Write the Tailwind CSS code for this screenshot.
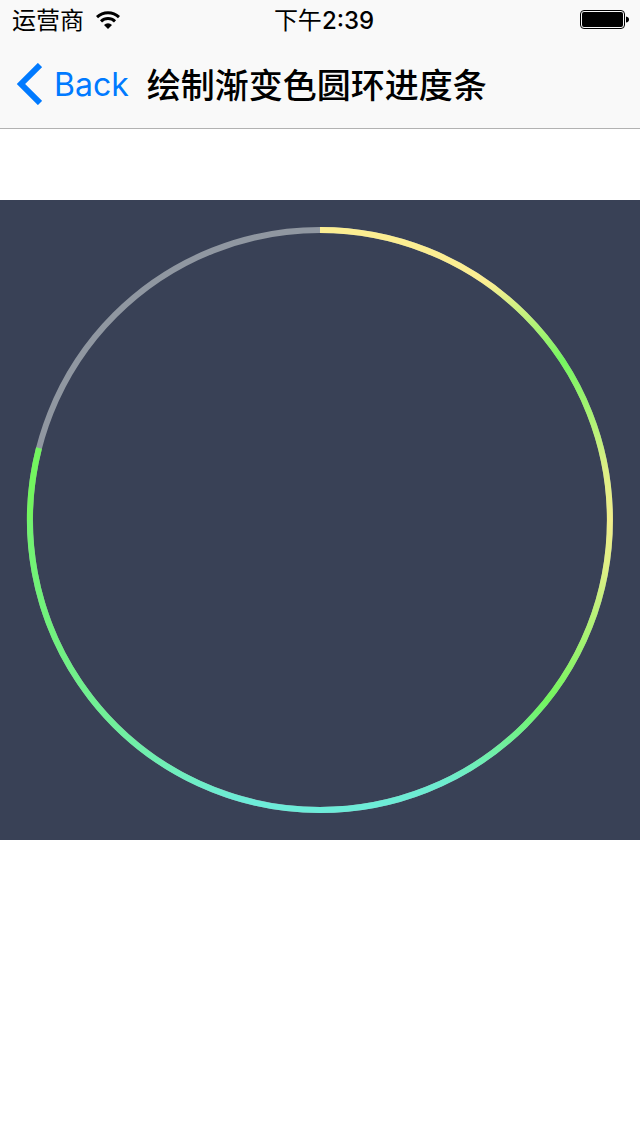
<!DOCTYPE html>
<html lang="zh-CN">
<head>
<meta charset="utf-8">
<meta name="viewport" content="width=device-width, initial-scale=1">
<title>绘制渐变色圆环进度条</title>
<script src="https://cdn.jsdelivr.net/npm/@tailwindcss/browser@4"></script>
</head>
<body class="min-h-screen bg-white text-black font-[Inter,'Noto_Sans_CJK_SC',sans-serif]">
<header class="border-b border-[#b2b2b2] bg-[#f9f9f9]">
  <div class="grid h-10 grid-cols-3 items-center pt-0.5 pl-3 pr-2.5 text-2xl">
    <div class="flex items-center gap-3">
      <span>运营商</span>
      <svg class="h-5 w-6" viewBox="0 0 24 20" fill="none" stroke="#000" stroke-width="3" aria-label="Wi-Fi">
        <path d="M1 6.1a16 16 0 0 1 22 0"/>
        <path d="M5 10.3a10.2 10.2 0 0 1 14 0"/>
        <path d="M12 18l-4-4.1a6 6 0 0 1 8 0z" fill="#000" stroke="none"/>
      </svg>
    </div>
    <time class="justify-self-center whitespace-nowrap pl-1.5 font-medium"><span class="font-normal">下午</span>2:39</time>
    <svg class="mb-0.5 h-5 w-[50px] justify-self-end" viewBox="0 0 50 20" aria-label="电池">
      <rect x=".5" y=".5" width="44" height="18" rx="3.5" fill="none" stroke="#000"/>
      <rect x="2" y="2" width="41" height="15" rx="2"/>
      <path d="M46 6.5q3 .5 3 3t-3 3z"/>
    </svg>
  </div>
  <nav class="flex h-22 items-center pl-4">
    <a href="#" class="flex items-center gap-3 text-[32px] text-[#007aff]">
      <svg class="h-[42px] w-[26px]" viewBox="0 0 26 42" fill="none" stroke="currentColor" stroke-width="6"><path d="M24 2L5 21l19 19"/></svg>
      <span class="pt-0.5">Back</span>
    </a>
    <h1 class="ml-[18px] pt-0.5 text-[34px] font-medium">绘制渐变色圆环进度条</h1>
  </nav>
</header>
<main class="pt-[71px]">
  <svg class="block aspect-square w-full bg-[#394156]" viewBox="0 0 640 640" fill="none" stroke-width="6" role="progressbar" aria-label="进度" aria-valuenow="79" aria-valuemin="0" aria-valuemax="100">
    <defs>
      <linearGradient id="right" gradientUnits="userSpaceOnUse" x1="0" y1="30" x2="0" y2="610">
        <stop offset="0" stop-color="#fcee92"/>
        <stop offset=".09" stop-color="#fcee92"/>
        <stop offset=".225" stop-color="#75f560"/>
        <stop offset=".41" stop-color="#dcef85"/>
        <stop offset=".5" stop-color="#f1ee8a"/>
        <stop offset=".59" stop-color="#dcef85"/>
        <stop offset=".81" stop-color="#73f55f"/>
        <stop offset=".95" stop-color="#6decce"/>
        <stop offset="1" stop-color="#6decd9"/>
      </linearGradient>
      <linearGradient id="left" gradientUnits="userSpaceOnUse" x1="0" y1="320" x2="0" y2="610">
        <stop offset="0" stop-color="#73f55f"/>
        <stop offset="0" stop-color="#72f36f"/>
        <stop offset=".43" stop-color="#71f180"/>
        <stop offset=".7" stop-color="#70ef9a"/>
        <stop offset=".84" stop-color="#6feeb4"/>
        <stop offset=".97" stop-color="#6decd9"/>
        <stop offset="1" stop-color="#6decd9"/>
      </linearGradient>
    </defs>
    <circle cx="320" cy="320" r="290" stroke="#9097a1"/>
    <path d="M320 610A290 290 0 0 1 39 248" stroke="url(#left)"/>
    <path d="M320 30a290 290 0 0 1 0 580" stroke="url(#right)"/>
  </svg>
</main>
</body>
</html>
